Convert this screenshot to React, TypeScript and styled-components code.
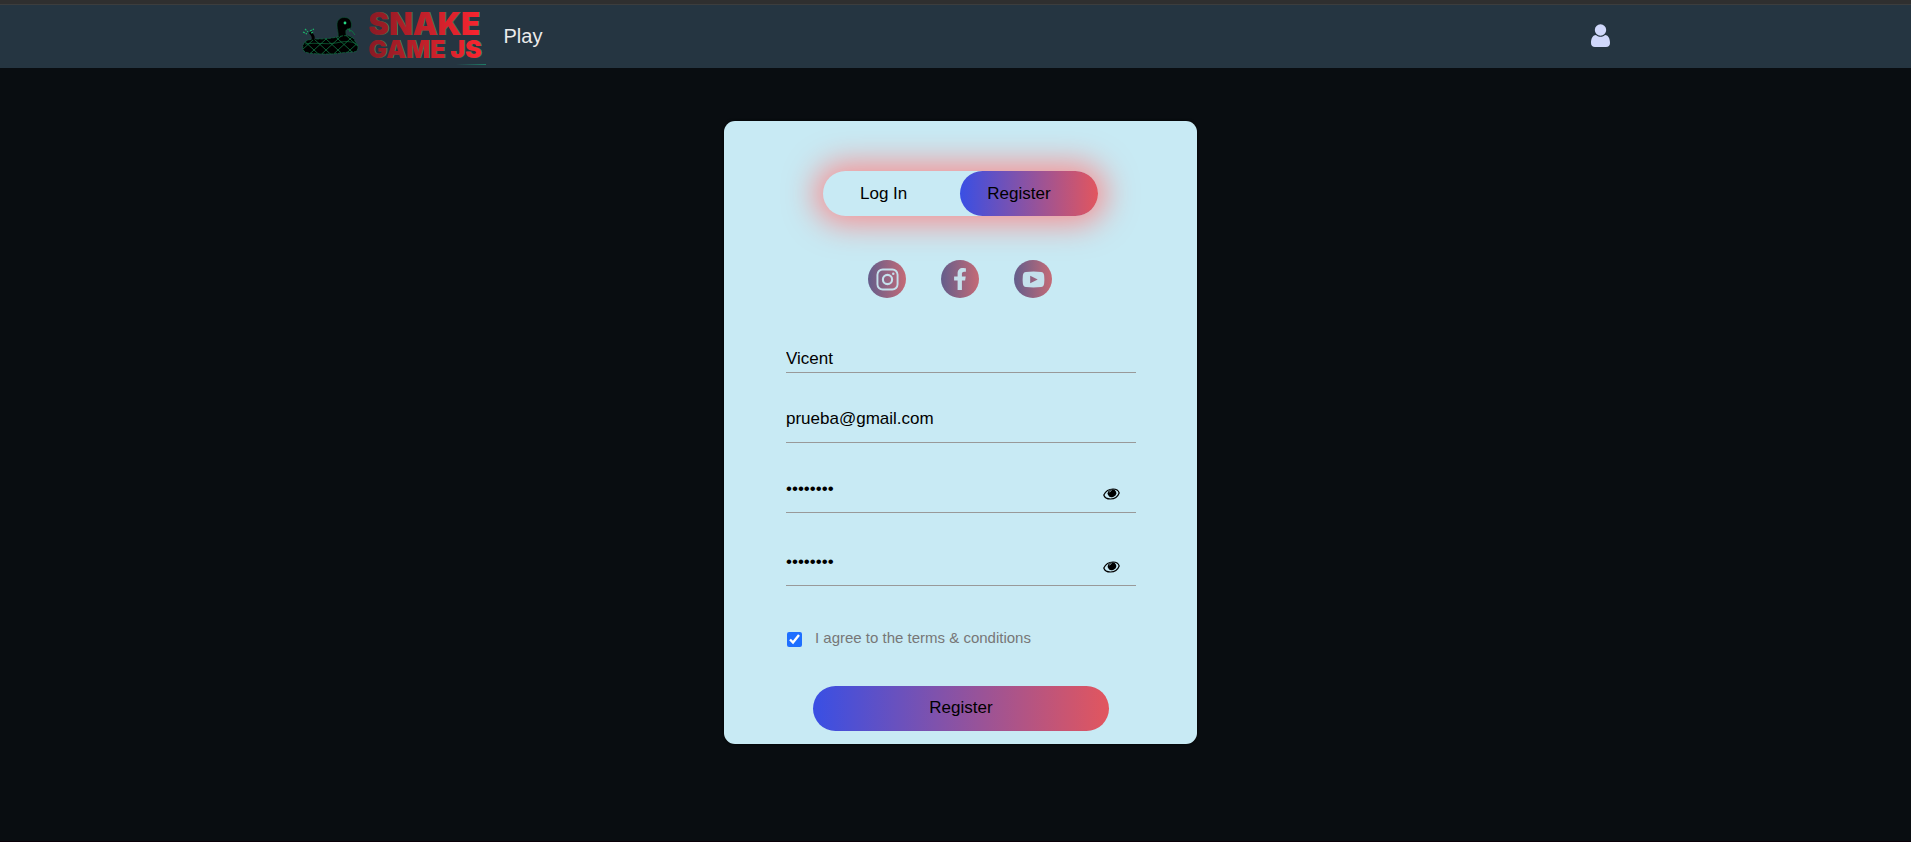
import React, { useState } from 'react';
import styled, { createGlobalStyle } from 'styled-components';
import { FaFacebookF } from 'react-icons/fa';

const accent = 'linear-gradient(to right, #394fe4, #e2565e)';

const GlobalStyle = createGlobalStyle`
  *, *::before, *::after { box-sizing: border-box; }
  body {
    margin: 0;
    background: #090d11;
    font-family: "Liberation Sans", Arial, sans-serif;
    color: #000;
  }
  button, input { font: inherit; color: inherit; }
`;

const Page = styled.div`
  min-height: 100vh;
  border-bottom: 1px solid #0a0008;
`;

const Header = styled.header`
  background: #253541;
  border-top: 4px solid #2f2f2f;
  box-shadow: inset 0 1px 0 #3c3d3d;
`;

const HeaderInner = styled.div`
  display: flex;
  align-items: center;
  max-width: 1320px;
  height: 64px;
  margin: 0 auto;
  padding: 0 6px;
  gap: 18px;
`;

const Brand = styled.a`
  position: relative;
  display: flex;
  align-items: center;
  gap: 10px;
  width: 184px;
  color: inherit;
  text-decoration: none;

  &::after {
    content: "";
    position: absolute;
    right: 0;
    bottom: -3px;
    width: 30px;
    height: 1px;
    background: linear-gradient(to right, transparent, #1e7d66);
  }
`;

const Wordmark = styled.span`
  display: flex;
  flex-direction: column;
  padding-bottom: 2px;
  font-family: Inter, sans-serif;
  font-weight: 900;
  white-space: nowrap;
  filter: drop-shadow(1px 0 0 #4b7a52);
`;

const WordLine = styled.span<{ $size: number; $line: number }>`
  font-size: ${(p) => p.$size}px;
  line-height: ${(p) => p.$line}px;
  background: linear-gradient(to right, #8a1a24, #fb2530);
  background-clip: text;
  -webkit-background-clip: text;
  color: transparent;
`;

const NavLink = styled.a`
  font-size: 20px;
  line-height: 24px;
  color: #ebebeb;
  text-decoration: none;
`;

const AccountLink = styled.a`
  display: flex;
  margin-left: auto;
  padding-bottom: 2px;
  color: #d0d8fb;
`;

const Main = styled.main`
  display: flex;
  justify-content: center;
  padding: 53px 0 53px 10px;
`;

const Card = styled.section`
  display: flex;
  flex-direction: column;
  align-items: center;
  width: 100%;
  max-width: 473px;
  padding: 50px 0 13px;
  background: #c8eaf4;
  border-radius: 11px;
  box-shadow: 0 0 3px #000;
`;

const Toggle = styled.div`
  position: relative;
  display: flex;
  gap: 6px;
  width: 275px;
  height: 45px;
  border-radius: 23px;
  background: #c8eaf4;
  box-shadow: 0 0 30px 9px rgba(255, 128, 128, 0.8);
`;

const TogglePill = styled.span`
  position: absolute;
  top: 0;
  right: 0;
  width: 138px;
  height: 100%;
  border-radius: 23px;
  background: ${accent};
`;

const ToggleButton = styled.button`
  position: relative;
  padding: 0 37px;
  border: 0;
  background: transparent;
  font-size: 17px;
  cursor: pointer;
`;

const Socials = styled.div`
  display: flex;
  gap: 35px;
  margin: 44px 1px 0 0;
`;

const SocialLink = styled.a`
  display: flex;
  align-items: center;
  justify-content: center;
  width: 38px;
  height: 38px;
  border-radius: 50%;
  background: linear-gradient(to right, #635d8b, #c56a76);
  color: #c4e0ec;
`;

const Form = styled.form`
  display: flex;
  flex-direction: column;
  width: 350px;
  margin: 39px 0 0 1px;
`;

const Field = styled.div<{ $gap?: number }>`
  display: flex;
  align-items: center;
  position: relative;
  margin-top: ${(p) => p.$gap ?? 0}px;
`;

const TextInput = styled.input<{ $tight?: boolean }>`
  width: 100%;
  padding: ${(p) => (p.$tight ? '12px 0 3px' : '11px 0 13px')};
  height: ${(p) => (p.$tight ? 36 : 45)}px;
  border: 0;
  border-bottom: 1px solid #999;
  border-radius: 0;
  outline: none;
  background: transparent;
  font-size: 17px;
  line-height: 20px;
`;

const RevealButton = styled.button`
  position: absolute;
  right: 16px;
  bottom: 13px;
  display: flex;
  padding: 0;
  border: 0;
  background: transparent;
  cursor: pointer;
`;

const Terms = styled.label`
  display: flex;
  align-items: center;
  gap: 13px;
  margin-top: 42px;
  font-size: 15px;
  line-height: 20px;
  color: #777;
`;

const Checkbox = styled.input`
  width: 15px;
  height: 15px;
  margin: 3px 0 0 1px;
  accent-color: #1f6fff;
`;

const SubmitButton = styled.button`
  align-self: center;
  width: 296px;
  height: 45px;
  margin-top: 38px;
  padding: 0 0 2px;
  border: 0;
  border-radius: 23px;
  background: ${accent};
  font-size: 17px;
  cursor: pointer;
`;

const SnakeLogo = () => (
  <svg width="57" height="38" viewBox="0 0 57 38" aria-hidden="true">
    <defs>
      <pattern id="scales" width="12" height="11" patternUnits="userSpaceOnUse">
        <path d="M0 0L12 11M12 0L0 11" stroke="#0f7343" strokeWidth="0.8" fill="none" />
      </pattern>
    </defs>
    <path d="M36 21C37 16 35 13 35 8C35 3 38 0.500 42.500 0.500C47 0.500 49.500 3.500 49.500 8C49.500 12 47 12.500 44 13C43.500 16 44 18 45 20Z" fill="#000" stroke="#0c5534" strokeWidth="0.6" />
    <path d="M3 25C6 22 11 22 17 22C24 22 30 21 36 20C42 18 48 18 51 21C53 23 53 25 55 27C57 31 56 35 51 35C42 35 36 37 28 37C18 37 8 37 3 35C0 33 0 28 3 25Z" fill="#000" />
    <path d="M3 25C6 22 11 22 17 22C24 22 30 21 36 20C42 18 48 18 51 21C53 23 53 25 55 27C57 31 56 35 51 35C42 35 36 37 28 37C18 37 8 37 3 35C0 33 0 28 3 25Z" fill="url(#scales)" stroke="#0f7043" strokeWidth="0.7" strokeDasharray="3 1" />
    <path d="M3 27C14 25 24 28 34 26C42 24 50 24 54 27" stroke="#12804a" strokeWidth="0.6" fill="none" />
    <path d="M11 23C12 20 10 17 8 15" stroke="#000" strokeWidth="3" fill="none" />
    <path d="M1 15L5 17M3 12L6 15M8 14L12 12M9 16L12 15" stroke="#1db36b" strokeWidth="1.2" strokeDasharray="2 1" />
    <path d="M45 12L50 14L53 18M47 11L48 15" stroke="#0f7043" strokeWidth="1" fill="none" />
    <circle cx="43" cy="6" r="1.400" fill="#25d883" />
  </svg>
);

const UserIcon = () => (
  <svg width="19" height="23" viewBox="0 0 19 23" fill="currentColor" aria-hidden="true">
    <path d="M5 11C2 11 0 14 0 19C0 21.500 1.500 23 4 23H15C17.500 23 19 21.500 19 19C19 14 17 11 14 11C13 12 11.500 12.800 9.500 12.800C7.500 12.800 6 12 5 11Z" />
    <circle cx="9.500" cy="6" r="5.700" />
  </svg>
);

const EyeIcon = () => (
  <svg width="17" height="12" viewBox="0 0 17 12" aria-hidden="true">
    <path d="M.8 7C3 2.500 6.500 1 10 1C13 1 15.500 2.500 16.200 5C14.500 9.500 11 11 7.500 11C4 11 1.500 9.500 .8 7Z" fill="none" stroke="#000" strokeWidth="1.200" />
    <ellipse cx="9" cy="5.200" rx="4.300" ry="3.800" transform="rotate(-25 9 5.200)" />
    <path d="M6.500 4.300C6.800 3.300 7.500 2.700 8.500 2.500" stroke="#c8eaf4" strokeWidth="0.8" fill="none" />
  </svg>
);

const InstagramIcon = () => (
  <svg width="23" height="23" viewBox="0 0 24 24" fill="none" stroke="currentColor" aria-hidden="true">
    <rect x="1.500" y="1.500" width="21" height="21" rx="5.500" strokeWidth="2" />
    <circle cx="12" cy="12" r="4.800" strokeWidth="2.200" />
    <circle cx="18" cy="6" r="1.300" fill="currentColor" stroke="none" />
  </svg>
);

const YoutubeIcon = () => (
  <svg width="23" height="17" viewBox="0 0 24 18" fill="currentColor" aria-hidden="true">
    <path fillRule="evenodd" d="M4 1Q12 0 20 1Q23 1.300 23.300 5Q23.700 9 23.300 13Q23 16.700 20 17Q12 18 4 17Q1 16.700 .7 13Q.3 9 .7 5Q1 1.300 4 1ZM8.500 5V13L16.500 9Z" />
  </svg>
);

type PasswordFieldProps = { label: string; gap: number };

const PasswordField = ({ label, gap }: PasswordFieldProps) => {
  const [visible, setVisible] = useState(false);
  return (
    <Field $gap={gap}>
      <TextInput type={visible ? 'text' : 'password'} aria-label={label} defaultValue="password" />
      <RevealButton type="button" aria-label="Show password" onClick={() => setVisible(!visible)}>
        <EyeIcon />
      </RevealButton>
    </Field>
  );
};

export default function App() {
  return (
    <Page>
      <GlobalStyle />
      <Header>
        <HeaderInner>
          <Brand href="#">
            <SnakeLogo />
            <Wordmark>
              <WordLine $size={31} $line={28}>SNAKE</WordLine>
              <WordLine $size={25} $line={22}>GAME JS</WordLine>
            </Wordmark>
          </Brand>
          <NavLink href="#play">Play</NavLink>
          <AccountLink href="#account" aria-label="Account">
            <UserIcon />
          </AccountLink>
        </HeaderInner>
      </Header>
      <Main>
        <Card>
          <Toggle>
            <TogglePill />
            <ToggleButton type="button">Log In</ToggleButton>
            <ToggleButton type="button">Register</ToggleButton>
          </Toggle>
          <Socials>
            <SocialLink href="#instagram" aria-label="Instagram"><InstagramIcon /></SocialLink>
            <SocialLink href="#facebook" aria-label="Facebook"><FaFacebookF size={22} /></SocialLink>
            <SocialLink href="#youtube" aria-label="YouTube"><YoutubeIcon /></SocialLink>
          </Socials>
          <Form onSubmit={(e) => e.preventDefault()}>
            <Field>
              <TextInput $tight type="text" aria-label="Username" defaultValue="Vicent" />
            </Field>
            <Field $gap={25}>
              <TextInput type="email" aria-label="Email" defaultValue="prueba@gmail.com" />
            </Field>
            <PasswordField label="Password" gap={25} />
            <PasswordField label="Repeat password" gap={28} />
            <Terms>
              <Checkbox type="checkbox" defaultChecked />
              I agree to the terms &amp; conditions
            </Terms>
            <SubmitButton type="submit">Register</SubmitButton>
          </Form>
        </Card>
      </Main>
    </Page>
  );
}
